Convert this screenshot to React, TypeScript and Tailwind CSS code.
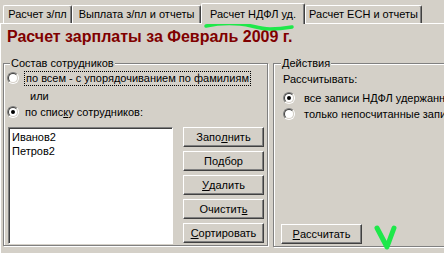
import React from 'react';

const Radio: React.FC<{ checked?: boolean }> = ({ checked }) => (
  <span className="flex items-center justify-center shrink-0 w-[12px] h-[12px] rounded-full border border-t-[#808080] border-l-[#808080] border-b-white border-r-white">
    <span className="flex items-center justify-center w-[10px] h-[10px] rounded-full bg-white border border-t-[#404040] border-l-[#404040] border-b-[#d4d0c8] border-r-[#d4d0c8]">
      {checked && <span className="w-[4px] h-[4px] rounded-full bg-black" />}
    </span>
  </span>
);

const Button: React.FC<{ children: React.ReactNode; className?: string }> = ({ children, className = '' }) => (
  <button
    className={`flex items-center justify-center h-[20px] bg-[#d4d0c8] border border-t-white border-l-white border-r-[#404040] border-b-[#404040] shadow-[inset_-1px_-1px_0_#808080] text-black ${className}`}
  >
    {children}
  </button>
);

const Tab: React.FC<{ label: string; width: string; active?: boolean }> = ({ label, width, active }) => (
  <div
    className={
      active
        ? `flex items-center justify-center ${width} h-[21px] -mb-px z-10 bg-[#d4d0c8] border-t border-l border-white border-r border-r-[#404040] rounded-t-[2px] shadow-[inset_-1px_0_0_#808080]`
        : `flex items-center justify-center ${width} h-[18px] bg-[#d4d0c8] border-t border-l border-white border-r border-r-[#404040] rounded-t-[2px] shadow-[inset_-1px_0_0_#808080]`
    }
  >
    {label}
  </div>
);

export default function App() {
  return (
    <div className="relative w-[444px] h-[253px] overflow-hidden bg-[#d4d0c8] text-black text-[11px] leading-[13px] font-['Liberation_Sans',Arial,sans-serif]">
      {/* tabs */}
      <div className="flex items-end h-[23px] pl-[3px] pt-[2px]">
        <Tab label="Расчет з/пл" width="w-[69px]" />
        <Tab label="Выплата з/пл и отчеты" width="w-[129px]" />
        <Tab label="Расчет НДФЛ уд." width="w-[104px]" active />
        <Tab label="Расчет ЕСН и отчеты" width="w-[117px]" />
      </div>

      {/* page */}
      <div className="flex flex-col w-[470px] h-[240px] border-t border-l border-white">
        <div className="ml-[6px] mt-[4px] text-[16px] leading-[18px] font-bold text-[#800000]">
          Расчет зарплаты за Февраль 2009 г.
        </div>

        <div className="flex mt-[17px]">
          {/* Состав сотрудников */}
          <div className="flex flex-col ml-[2px] w-[269px] h-[183px] border border-[#808080] shadow-[1px_1px_0_#fff,inset_1px_1px_0_#fff]">
            <span className="self-start -mt-[7px] ml-[6px] px-[1px] bg-[#d4d0c8]">Состав сотрудников</span>
            <div className="flex items-center h-[16px] ml-[3px] gap-[5px]">
              <Radio />
              <span className="px-[1px] border border-dotted border-black leading-[13px]">
                по всем - с упорядочиванием по фамилиям
              </span>
            </div>
            <div className="h-[16px] mt-[2px] ml-[26px] flex items-center">или</div>
            <div className="flex items-center h-[16px] ml-[3px] gap-[6px]">
              <Radio checked />
              <span>
                по спис<u>к</u>у сотрудников:
              </span>
            </div>
            <div className="flex mt-[7px]">
              <div className="ml-[4px] w-[165px] h-[117px] bg-white border border-t-[#808080] border-l-[#808080] border-b-white border-r-white shadow-[inset_1px_1px_0_#404040] pl-[3px] pt-[2px]">
                <div className="leading-[14px]">Иванов2</div>
                <div className="leading-[14px]">Петров2</div>
              </div>
              <div className="flex flex-col ml-[10px] w-[81px] gap-[4px]">
                <Button>
                  Запо<u>л</u>нить
                </Button>
                <Button>
                  По<u>д</u>бор
                </Button>
                <Button>
                  <u>У</u>далить
                </Button>
                <Button>
                  Очистит<u>ь</u>
                </Button>
                <Button>
                  <u>С</u>ортировать
                </Button>
              </div>
            </div>
          </div>

          {/* Действия */}
          <div className="flex flex-col ml-[5px] w-[200px] h-[184px] border border-[#808080] shadow-[1px_1px_0_#fff,inset_1px_1px_0_#fff]">
            <span className="self-start -mt-[7px] ml-[7px] px-[1px] bg-[#d4d0c8]">Действия</span>
            <div className="ml-[9px] mt-[3px]">Рассчитывать:</div>
            <div className="flex items-center h-[16px] mt-[4px] ml-[9px] gap-[9px] whitespace-nowrap">
              <Radio checked />
              <span>все записи НДФЛ удержанные</span>
            </div>
            <div className="flex items-center h-[16px] ml-[9px] gap-[9px] whitespace-nowrap">
              <Radio />
              <span>только непосчитанные записи</span>
            </div>
            <Button className="mt-auto mb-[2px] ml-[7px] w-[81px]">
              <u>Р</u>ассчитать
            </Button>
          </div>
        </div>
      </div>

      {/* green marker scribbles */}
      <svg className="absolute left-0 top-0 pointer-events-none" width="444" height="253">
        <path
          d="M206 26 C215 24, 228 23, 240 24 C252 25, 258 29, 270 29 C280 29, 286 28, 292 27"
          fill="none"
          stroke="#1ee84a"
          strokeWidth="3.5"
          strokeLinecap="round"
        />
        <path
          d="M377 228 L387 247 L394 228"
          fill="none"
          stroke="#1ee84a"
          strokeWidth="5"
          strokeLinecap="round"
          strokeLinejoin="round"
        />
      </svg>
    </div>
  );
}
